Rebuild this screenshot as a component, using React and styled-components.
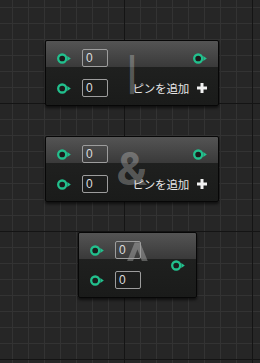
import React from "react";
import styled, { createGlobalStyle } from "styled-components";

// Graph canvas + logic nodes
const GlobalStyle = createGlobalStyle`
  html, body {
    margin: 0;
    padding: 0;
  }
  body {
    width: 260px;
    height: 363px;
    overflow: hidden;
    background-color: #262626;
    background-image:
      linear-gradient(to right, #141414 1px, transparent 1px),
      linear-gradient(to bottom, #141414 1px, transparent 1px),
      linear-gradient(to right, #333333 1px, transparent 1px),
      linear-gradient(to bottom, #333333 1px, transparent 1px);
    background-size: 128px 128px, 128px 128px, 16px 16px, 16px 16px;
    background-position: 124px 0, 0 103px, 12px 0, 0 7px;
    font-family: "Noto Sans CJK JP", "Noto Sans", sans-serif;
  }
`;

const Canvas = styled.div`
  position: relative;
  width: 260px;
  height: 363px;
`;

const Node = styled.div`
  position: absolute;
  left: ${(p) => p.$x}px;
  top: ${(p) => p.$y}px;
  width: ${(p) => p.$w}px;
  height: 66px;
  box-sizing: border-box;
  border: 1px solid #070707;
  border-radius: 2px;
  background: linear-gradient(
    to bottom,
    #545454 0,
    #3a3a3a 40%,
    #1f201f 40%,
    #1a1b1a 100%
  );
  box-shadow: 0 2px 3px rgba(0, 0, 0, 0.6);
`;

const Symbol = styled.div`
  position: absolute;
  inset: 0;
  display: flex;
  align-items: center;
  justify-content: center;
  font-family: Roboto, "Liberation Sans", sans-serif;
  font-weight: 700;
  font-size: ${(p) => p.$size || 47}px;
  line-height: 1;
  padding-bottom: ${(p) => p.$lift || 0}px;
  color: rgba(255, 255, 255, 0.27);
  pointer-events: none;
`;

const Body = styled.div`
  position: relative;
  display: flex;
  justify-content: space-between;
  height: 100%;
  box-sizing: border-box;
  padding: 6px 11px 6px 11px;
`;

const Column = styled.div`
  display: flex;
  flex-direction: column;
  justify-content: ${(p) => (p.$center ? "center" : "flex-start")};
  align-items: ${(p) => (p.$end ? "flex-end" : "flex-start")};
  gap: 8px;
`;

const Row = styled.div`
  display: flex;
  align-items: center;
  height: 22px;
  gap: ${(p) => p.$gap || 11}px;
`;

const ValueBox = styled.div`
  width: 26px;
  height: 18px;
  box-sizing: border-box;
  border: 1px solid #9d9d9d;
  border-radius: 2px;
  padding-left: 3px;
  font-family: "Liberation Sans", Arial, sans-serif;
  font-size: 12px;
  line-height: 16px;
  color: #dcdcdc;
`;

const AddLabel = styled.span`
  font-family: "Noto Sans CJK JP", sans-serif;
  font-size: 11.5px;
  color: #e6e6e6;
  letter-spacing: -0.2px;
`;

const Pin = () => (
  <svg width="14" height="11" viewBox="0 0 14 11">
    <circle cx="5.2" cy="5.5" r="4" fill="#1b1b1b" stroke="#22c08d" strokeWidth="2.3" />
    <polygon points="10.3,3 13.8,5.5 10.3,8" fill="#22c08d" />
  </svg>
);

const Plus = () => (
  <svg width="10" height="10" viewBox="0 0 10 10">
    <rect x="3.5" y="0" width="3" height="10" fill="#f2f2f2" />
    <rect x="0" y="3.5" width="10" height="3" fill="#f2f2f2" />
  </svg>
);

const InputRow = () => (
  <Row>
    <Pin />
    <ValueBox>0</ValueBox>
  </Row>
);

const LogicNode = ({ x, y, w, symbol, size, lift, canAdd }) => (
  <Node $x={x} $y={y} $w={w}>
    <Symbol $size={size} $lift={lift}>{symbol}</Symbol>
    <Body>
      <Column>
        <InputRow />
        <InputRow />
      </Column>
      {canAdd ? (
        <Column $end>
          <Row>
            <Pin />
          </Row>
          <Row $gap={8}>
            <AddLabel>ピンを追加</AddLabel>
            <Plus />
          </Row>
        </Column>
      ) : (
        <Column $end $center>
          <Pin />
        </Column>
      )}
    </Body>
  </Node>
);

export default function App() {
  return (
    <>
      <GlobalStyle />
      <Canvas>
        <LogicNode x={45} y={40} w={174} symbol="|" lift={4} canAdd />
        <LogicNode x={45} y={136} w={174} symbol="&" lift={2} canAdd />
        <LogicNode x={78} y={232} w={119} symbol="^" size={52} lift={4} />
      </Canvas>
    </>
  );
}
